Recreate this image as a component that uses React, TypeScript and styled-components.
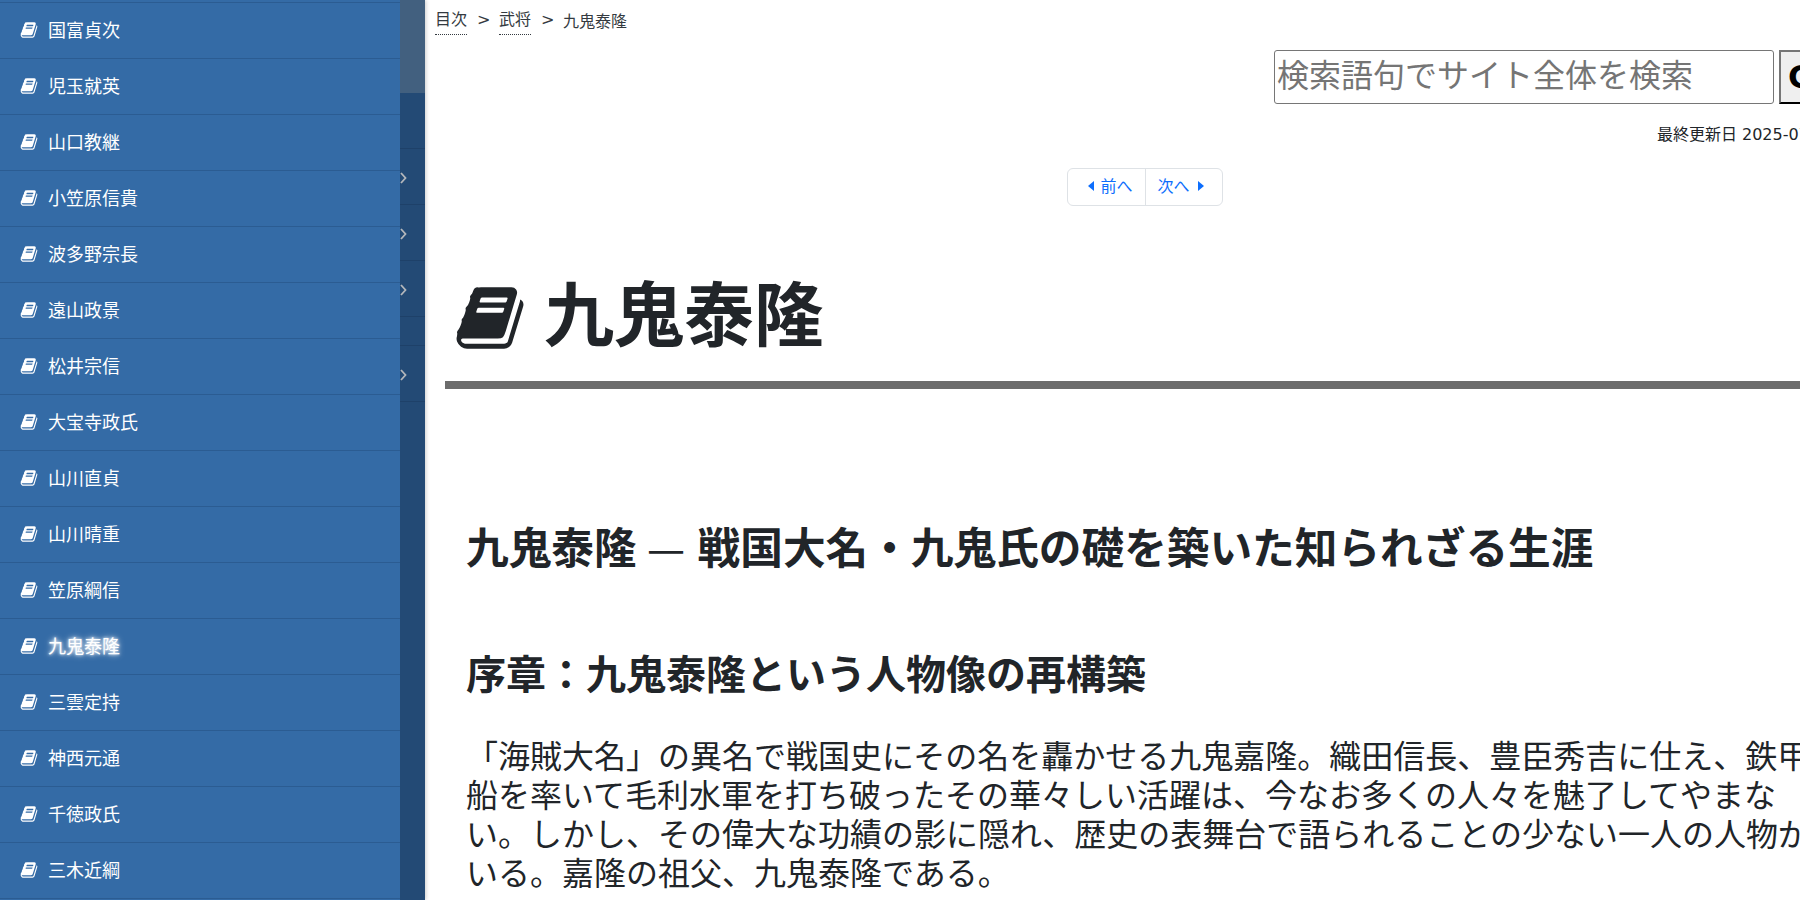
import React from "react";
import styled, { createGlobalStyle } from "styled-components";

const Global = createGlobalStyle`
  html, body { margin: 0; padding: 0; height: 100%; overflow: hidden; background: #fff; }
  body { font-family: "DejaVu Sans", "Noto Sans CJK JP", sans-serif; color: #212529; }
  * { box-sizing: border-box; }
`;

const Page = styled.div`
  display: flex;
  width: 1800px;
  height: 900px;
  overflow: hidden;
`;

const Sidebar = styled.nav`
  flex: 0 0 425px;
  height: 900px;
  display: grid;
  grid-template-columns: 400px 25px;
  overflow: hidden;
  box-shadow: 1px 0 4px rgba(0, 0, 0, 0.2);
  position: relative;
  z-index: 1;
`;

const SubMenu = styled.ul`
  list-style: none;
  margin: -53px 0 0;
  padding: 0;
  background: #346ba6;
`;

const SubItem = styled.li<{ $active?: boolean }>`
  height: 56px;
  border-bottom: 1px solid #2b5c92;
  display: flex;
  align-items: center;
  padding-left: 20px;
  color: #fff;
  font-size: 18px;
  text-shadow: ${(p) => (p.$active ? "0 0 6px #fff, 0 0 3px #fff" : "none")};
`;

const SubLabel = styled.span`
  margin: 0 0 4px 10px;
`;

const Rail = styled.div`
  display: flex;
  flex-direction: column;
  background: #234a75;
`;

const RailTop = styled.div`
  height: 93px;
  background: #42607f;
`;

const RailRow = styled.div<{ $h: number }>`
  height: ${(p) => p.$h}px;
  padding-top: 2px;
  border-bottom: 1px solid #1e4169;
  display: flex;
  align-items: center;
  justify-content: flex-start;
`;

const Main = styled.main`
  flex: 0 0 1375px;
  height: 900px;
  overflow: hidden;
  padding-left: 10px;
`;

const Crumbs = styled.div`
  display: flex;
  align-items: center;
  height: 43px;
  padding-bottom: 4px;
  font-size: 16px;
  color: #343a40;
  white-space: nowrap;
`;

const CrumbLink = styled.a`
  border-bottom: 1px dotted #343a40;
  line-height: 18px;
  height: 24px;
  margin-top: 6px;
`;

const CrumbSep = styled.span`
  margin: 0 9px 0 10px;
  width: 13px;
  text-align: center;
`;

const CrumbCurrent = styled.span``;

const Content = styled.div`
  width: 1400px;
  margin-left: 10px;
`;

const SearchRow = styled.form`
  display: flex;
  justify-content: flex-end;
  align-items: stretch;
  gap: 5px;
  margin-top: 7px;
  height: 54px;
`;

const SearchInput = styled.input`
  width: 500px;
  height: 54px;
  font-size: 32px;
  font-family: inherit;
  padding: 0 2px 3px;
  border: 1px solid #767676;
  border-radius: 3px;
  &::placeholder { color: #757575; opacity: 1; }
`;

const SearchButton = styled.button`
  width: 66px;
  height: 54px;
  font-size: 32px;
  font-weight: 700;
  font-family: inherit;
  color: #000;
  background: #efefef;
  border-width: 2px;
  border-style: solid;
  border-color: #767676 #000 #000 #767676;
  padding: 0;
`;

const Updated = styled.div`
  text-align: right;
  font-size: 16px;
  line-height: 24px;
  margin-top: 19px;
  padding-right: 10px;
  color: #212529;
`;

const PagerWrap = styled.div`
  display: flex;
  justify-content: center;
  margin-top: 21px;
`;

const Pager = styled.div`
  display: flex;
  height: 38px;
  border: 1px solid #dee2e6;
  border-radius: 6px;
  font-size: 16px;
  color: #0d6efd;
`;

const PagerLink = styled.a<{ $first?: boolean }>`
  display: flex;
  align-items: center;
  gap: ${(p) => (p.$first ? "6px" : "8px")};
  padding: ${(p) => (p.$first ? "0 12px 5px 20px" : "0 18px 5px 12px")};
  border-left: ${(p) => (p.$first ? "none" : "1px solid #dee2e6")};
`;

const Caret = styled.svg`
  width: 6px;
  height: 10px;
  margin-top: 3px;
  fill: #0d6efd;
`;

const Title = styled.h1`
  display: flex;
  align-items: center;
  gap: 18px;
  height: 191px;
  margin: -8px 0 0;
  padding: 55px 0 0 9px;
  border-bottom: 8px solid #6c6c6c;
  font-size: 70px;
  line-height: 1.2;
  font-weight: 700;
  color: #212529;
`;

const Book = styled.svg<{ $size: number; $nudge?: number }>`
  flex: none;
  width: ${(p) => p.$size}px;
  height: ${(p) => p.$size}px;
  margin-top: ${(p) => p.$nudge ?? 0}px;
  fill: currentColor;
`;

const Article = styled.article`
  padding: 0 21px;
`;

const H2 = styled.h2`
  margin: 128px 0 0;
  font-size: 42.67px;
  line-height: 58px;
  font-weight: 700;
  white-space: nowrap;
`;

const Dash = styled.span`
  margin: 0 -2.3px 0 -4.6px;
  font-family: "Noto Sans CJK JP", sans-serif;
  font-weight: 400;
`;

const H3 = styled.h3`
  margin: 68px 0 0;
  font-size: 40px;
  line-height: 58px;
  font-weight: 700;
  white-space: nowrap;
`;

const Para = styled.p`
  margin: 34px 0 0;
  font-size: 32px;
  line-height: 39px;
  color: #212529;
`;

const BookIcon = ({ size, nudge }: { size: number; nudge?: number }) => (
  <Book $size={size} $nudge={nudge} viewBox="0 0 1664 1792" aria-hidden="true">
    <path d="M1639 478q40 57 18 129l-275 906q-19 64-76.5 107.5t-122.5 43.5h-923q-77 0-148.5-53.5t-99.5-131.5q-24-67-2-127 0-4 3-27t4-37q1-8-3-21.5t-3-19.5q2-11 8-21t16.5-23.5 16.5-23.5q23-38 45-91.5t30-91.5q3-10 .5-30t-.5-28q3-11 17-28t17-23q21-36 42-92t25-90q1-9-2.5-32t.5-28q4-13 22-30.5t22-22.5q19-26 42.5-84.5t27.5-96.5q1-8-3-25.5t-2-26.5q2-8 9-18t18-23 17-21q8-12 16.5-30.5t15-35 16-36 19.5-32 26.5-23.5 36-11.5 47.5 5.5l-1 3q38-9 51-9h761q74 0 114 56t18 130l-274 906q-36 119-71.5 153.5t-128.5 34.5h-869q-27 0-38 15-11 16-1 43 24 70 144 70h923q29 0 56-15.5t35-41.5l300-987q7-22 5-57 38 15 59 43zm-1064 2q-4 13 2 22.5t20 9.5h608q13 0 25.5-9.5t16.5-22.5l21-64q4-13-2-22.5t-20-9.5h-608q-13 0-25.5 9.5t-16.5 22.5zm-83 256q-4 13 2 22.5t20 9.5h608q13 0 25.5-9.5t16.5-22.5l21-64q4-13-2-22.5t-20-9.5h-608q-13 0-25.5 9.5t-16.5 22.5z" />
  </Book>
);

const Chevron = () => (
  <svg width="7" height="12" viewBox="0 0 7 12" aria-hidden="true">
    <path d="M1 1l4.5 5L1 11" fill="none" stroke="#b4b7bb" strokeWidth="1.8" />
  </svg>
);

const names = [
  "細川晴元", "国富貞次", "児玉就英", "山口教継", "小笠原信貴", "波多野宗長", "遠山政景", "松井宗信",
  "大宝寺政氏", "山川直貞", "山川晴重", "笠原綱信", "九鬼泰隆", "三雲定持", "神西元通", "千徳政氏", "三木近綱",
];

const railRows = [
  { h: 56, c: false }, { h: 56, c: true }, { h: 56, c: true }, { h: 56, c: true },
  { h: 29, c: false }, { h: 56, c: true },
];

export default function App() {
  return (
    <Page>
      <Global />
      <Sidebar>
        <SubMenu>
          {names.map((n) => (
            <SubItem key={n} $active={n === "九鬼泰隆"}>
              <BookIcon size={18} nudge={-2} />
              <SubLabel>{n}</SubLabel>
            </SubItem>
          ))}
        </SubMenu>
        <Rail>
          <RailTop />
          {railRows.map((r, i) => (
            <RailRow key={i} $h={r.h}>{r.c && <Chevron />}</RailRow>
          ))}
        </Rail>
      </Sidebar>
      <Main>
        <Crumbs>
          <CrumbLink>目次</CrumbLink>
          <CrumbSep>&gt;</CrumbSep>
          <CrumbLink>武将</CrumbLink>
          <CrumbSep>&gt;</CrumbSep>
          <CrumbCurrent>九鬼泰隆</CrumbCurrent>
        </Crumbs>
        <Content>
          <SearchRow onSubmit={(e) => e.preventDefault()}>
            <SearchInput placeholder="検索語句でサイト全体を検索" />
            <SearchButton>Go</SearchButton>
          </SearchRow>
          <Updated>最終更新日 2025-07-12</Updated>
          <PagerWrap>
            <Pager>
              <PagerLink $first>
                <Caret viewBox="0 0 6 10"><path d="M6 0v10L0 5z" /></Caret>
                前へ
              </PagerLink>
              <PagerLink>
                次へ
                <Caret viewBox="0 0 6 10"><path d="M0 0v10l6-5z" /></Caret>
              </PagerLink>
            </Pager>
          </PagerWrap>
          <Title>
            <BookIcon size={72} nudge={2} />
            九鬼泰隆
          </Title>
          <Article>
            <H2>九鬼泰隆 <Dash>—</Dash> 戦国大名・九鬼氏の礎を築いた知られざる生涯</H2>
            <H3>序章：九鬼泰隆という人物像の再構築</H3>
            <Para>
              「海賊大名」の異名で戦国史にその名を轟かせる九鬼嘉隆。織田信長、豊臣秀吉に仕え、鉄甲船を率いて毛利水軍を打ち破ったその華々しい活躍は、今なお多くの人々を魅了してやまない。しかし、その偉大な功績の影に隠れ、歴史の表舞台で語られることの少ない一人の人物がいる。嘉隆の祖父、九鬼泰隆である。
            </Para>
          </Article>
        </Content>
      </Main>
    </Page>
  );
}
